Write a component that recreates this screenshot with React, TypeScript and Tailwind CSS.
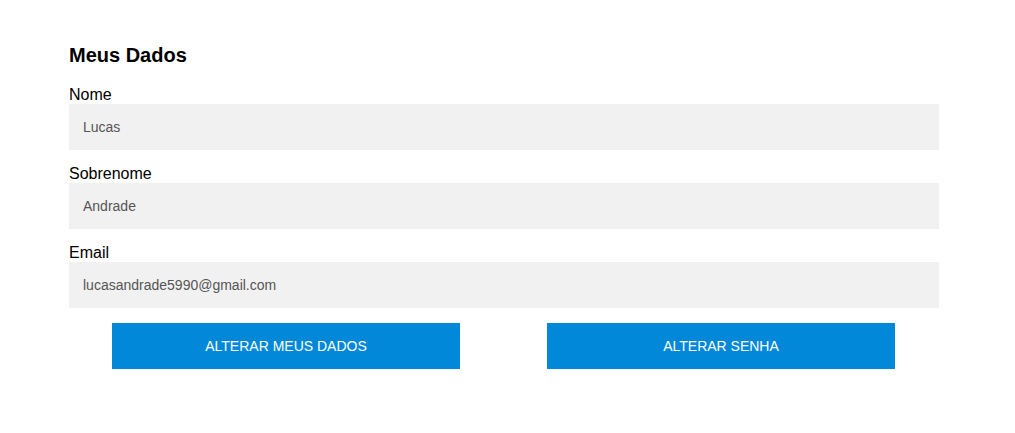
export default function App() {
  const fields = [
    { label: "Nome", value: "Lucas" },
    { label: "Sobrenome", value: "Andrade" },
    { label: "Email", value: "lucasandrade5990@gmail.com" },
  ];

  return (
    <div className="min-h-screen bg-white font-['Liberation_Sans',Arial,sans-serif] text-black">
      <div className="ml-[69px] w-[870px] pt-[43px]">
        <h3 className="mb-[18px] text-[20px] font-bold leading-[24px]">Meus Dados</h3>

        {fields.map((field, i) => (
          <div key={field.label} className={i < fields.length - 1 ? "mb-[14px]" : ""}>
            <label className="block text-[16px] leading-[19px]">{field.label}</label>
            <input
              type="text"
              defaultValue={field.value}
              className="block h-[46px] w-full bg-[#f1f1f1] px-[14px] text-[14px] text-[#555] outline-none"
            />
          </div>
        ))}

        {/* Actions */}
        <div className="mt-[15px] grid grid-cols-2">
          <button className="ml-[43px] h-[46px] w-[348px] bg-[#0288d8] text-[14px] uppercase text-white">
            Alterar meus dados
          </button>
          <button className="ml-[43px] h-[46px] w-[348px] bg-[#0288d8] text-[14px] uppercase text-white">
            Alterar senha
          </button>
        </div>
      </div>
    </div>
  );
}
